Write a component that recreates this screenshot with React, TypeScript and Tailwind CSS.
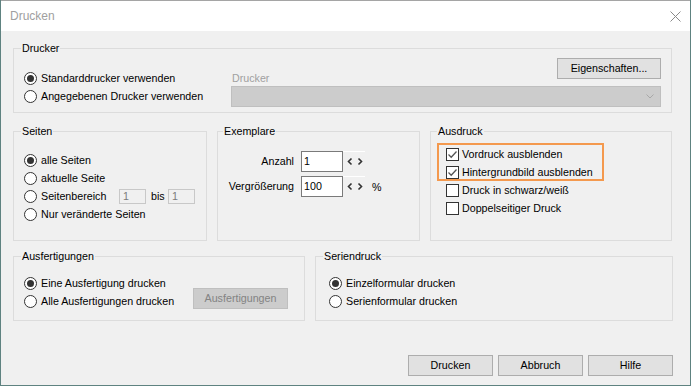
import type { ReactNode } from "react";

function Radio({ checked }: { checked?: boolean }) {
  return (
    <span className="flex h-[13px] w-[13px] shrink-0 items-center justify-center rounded-full border border-[#333333] bg-white">
      {checked && <span className="h-[7px] w-[7px] rounded-full bg-[#333333]" />}
    </span>
  );
}

function Check({ checked }: { checked?: boolean }) {
  return (
    <span className="flex h-[13px] w-[13px] shrink-0 items-center justify-center border border-[#333333] bg-white">
      {checked && (
        <svg width="11" height="11" viewBox="0 0 11 11">
          <path d="M1.5 5.5 L4.2 8.2 L9.5 2.5" fill="none" stroke="#555555" strokeWidth="1.3" />
        </svg>
      )}
    </span>
  );
}

function Option({ checked, children }: { checked?: boolean; children: ReactNode }) {
  return (
    <div className="flex h-[18px] items-center gap-[4px]">
      <Radio checked={checked} />
      <span>{children}</span>
    </div>
  );
}

function Group({
  label,
  labelLeft = "left-[7px]",
  className,
  children,
}: {
  label: string;
  labelLeft?: string;
  className: string;
  children: ReactNode;
}) {
  return (
    <div className={`relative shrink-0 border border-[#dcdcdc] ${className}`}>
      <span className={`absolute top-[-7px] bg-[#f0f0f0] px-[1px] leading-[13px] ${labelLeft}`}>{label}</span>
      {children}
    </div>
  );
}

function Btn({ children, w = "w-[85px]", disabled }: { children: ReactNode; w?: string; disabled?: boolean }) {
  return (
    <button
      className={`flex h-[21px] shrink-0 items-center justify-center border text-[10.7px] leading-[13px] ${w} ${
        disabled ? "border-[#bfbfbf] bg-[#cccccc] text-[#838383]" : "border-[#adadad] bg-[#e1e1e1] text-black"
      }`}
    >
      {children}
    </button>
  );
}

function Spinner() {
  return (
    <svg width="22" height="21" viewBox="0 0 22 21" className="shrink-0">
      <line x1="0" y1="0.5" x2="22" y2="0.5" stroke="#ffffff" />
      <path d="M8.5 7.5 L5.5 10.5 L8.5 13.5" fill="none" stroke="#333333" strokeWidth="1.6" />
      <path d="M15.5 7.5 L18.5 10.5 L15.5 13.5" fill="none" stroke="#333333" strokeWidth="1.6" />
    </svg>
  );
}

export default function App() {
  return (
    <div className="h-[386px] w-[691px] overflow-hidden bg-[#5e8280] font-['Liberation_Sans',Arial,sans-serif] text-[10.7px] leading-[13px] text-black">
      <div className="ml-[1px] flex h-[385px] w-[689px] flex-col border-t border-[#a5a5a5] bg-[#f0f0f0]">
        {/* title bar */}
        <div className="flex h-[30px] shrink-0 items-center bg-white pl-[9px] pr-[9px]">
          <span className="text-[12px] text-[#a0a0a0]">Drucken</span>
          <svg width="11" height="11" viewBox="0 0 11 11" className="ml-auto">
            <path d="M0.5 0.5 L10.5 10.5 M10.5 0.5 L0.5 10.5" stroke="#8a8a8a" strokeWidth="1" />
          </svg>
        </div>

        <div className="flex flex-col pl-[12px] pt-[17px]">
          {/* Drucker */}
          <Group label="Drucker" className="h-[65px] w-[659px]">
            <div className="flex">
              <div className="flex flex-col pl-[10px] pt-[20px]">
                <Option checked>Standarddrucker verwenden</Option>
                <Option>Angegebenen Drucker verwenden</Option>
              </div>
              <div className="ml-auto mr-[10px] w-[430px] pt-[9px]">
                <div className="flex h-[28px] justify-between">
                  <span className="self-end pb-[1px] pl-[1px] text-[#a0a0a0]">Drucker</span>
                  <Btn w="w-[104px]">Eigenschaften...</Btn>
                </div>
                <div className="flex h-[21px] items-center justify-end border border-[#bfbfbf] bg-[#cccccc] pr-[6px]">
                  <svg width="8" height="5" viewBox="0 0 8 5">
                    <path d="M0.5 0.5 L4 4 L7.5 0.5" fill="none" stroke="#a8a8a8" strokeWidth="1" />
                  </svg>
                </div>
              </div>
            </div>
          </Group>

          {/* middle row */}
          <div className="mt-[18px] flex gap-[10px]">
            <Group label="Seiten" className="h-[110px] w-[194px]">
              <div className="flex flex-col pl-[10px] pt-[19px]">
                <Option checked>alle Seiten</Option>
                <Option>aktuelle Seite</Option>
                <div className="flex h-[18px] items-center gap-[4px]">
                  <Radio />
                  <span className="w-[78px] shrink-0">Seitenbereich</span>
                  <span className="-ml-[4px] flex h-[15px] w-[27px] items-center border border-[#c8c8c8] bg-[#f0f0f0] pl-[3px] text-[#7a7a7a]">
                    1
                  </span>
                  <span className="-ml-[4px] w-[22px] shrink-0 pl-[5px]">bis</span>
                  <span className="-ml-[4px] flex h-[15px] w-[27px] items-center border border-[#c8c8c8] bg-[#f0f0f0] pl-[3px] text-[#7a7a7a]">
                    1
                  </span>
                </div>
                <Option>Nur veränderte Seiten</Option>
              </div>
            </Group>

            <Group label="Exemplare" labelLeft="left-[5px]" className="h-[110px] w-[203px]">
              <div className="flex flex-col gap-[4px] pt-[19px]">
                <div className="flex h-[21px] items-center">
                  <span className="w-[76px] text-right">Anzahl</span>
                  <span className="ml-[7px] flex h-[21px] w-[42px] items-center border border-[#7a7a7a] bg-white pl-[2px]">1</span>
                  <Spinner />
                </div>
                <div className="flex h-[21px] items-center">
                  <span className="w-[76px] text-right">Vergrößerung</span>
                  <span className="ml-[7px] flex h-[21px] w-[42px] items-center border border-[#7a7a7a] bg-white pl-[2px]">100</span>
                  <Spinner />
                  <span className="ml-[7px] mt-[2px]">%</span>
                </div>
              </div>
            </Group>

            <Group label="Ausdruck" labelLeft="left-[6px]" className="h-[110px] w-[242px]">
              <div className="flex flex-col pl-[15px] pt-[13px]">
                <div className="flex h-[18px] items-center gap-[3px]">
                  <Check checked />
                  <span>Vordruck ausblenden</span>
                </div>
                <div className="flex h-[18px] items-center gap-[3px]">
                  <Check checked />
                  <span>Hintergrundbild ausblenden</span>
                </div>
                <div className="flex h-[18px] items-center gap-[3px]">
                  <Check />
                  <span>Druck in schwarz/weiß</span>
                </div>
                <div className="flex h-[18px] items-center gap-[3px]">
                  <Check />
                  <span>Doppelseitiger Druck</span>
                </div>
              </div>
              <div className="absolute left-[6px] top-[11px] h-[38px] w-[167px] border-2 border-[#f4994e]" />
            </Group>
          </div>

          {/* bottom row */}
          <div className="mt-[15px] flex gap-[10px]">
            <Group label="Ausfertigungen" className="h-[65px] w-[292px]">
              <div className="flex">
                <div className="flex flex-col pl-[10px] pt-[17px]">
                  <Option checked>Eine Ausfertigung drucken</Option>
                  <Option>Alle Ausfertigungen drucken</Option>
                </div>
                <div className="ml-auto mr-[16px] pt-[31px]">
                  <Btn w="w-[95px]" disabled>
                    Ausfertigungen
                  </Btn>
                </div>
              </div>
            </Group>

            <Group label="Seriendruck" labelLeft="left-[7px]" className="h-[65px] w-[358px]">
              <div className="flex flex-col pl-[13px] pt-[17px]">
                <Option checked>Einzelformular drucken</Option>
                <Option>Serienformular drucken</Option>
              </div>
            </Group>
          </div>

          {/* buttons */}
          <div className="mt-[34px] flex w-[660px] justify-end gap-[5px]">
            <Btn>Drucken</Btn>
            <Btn>Abbruch</Btn>
            <Btn>Hilfe</Btn>
          </div>
        </div>
      </div>
    </div>
  );
}
